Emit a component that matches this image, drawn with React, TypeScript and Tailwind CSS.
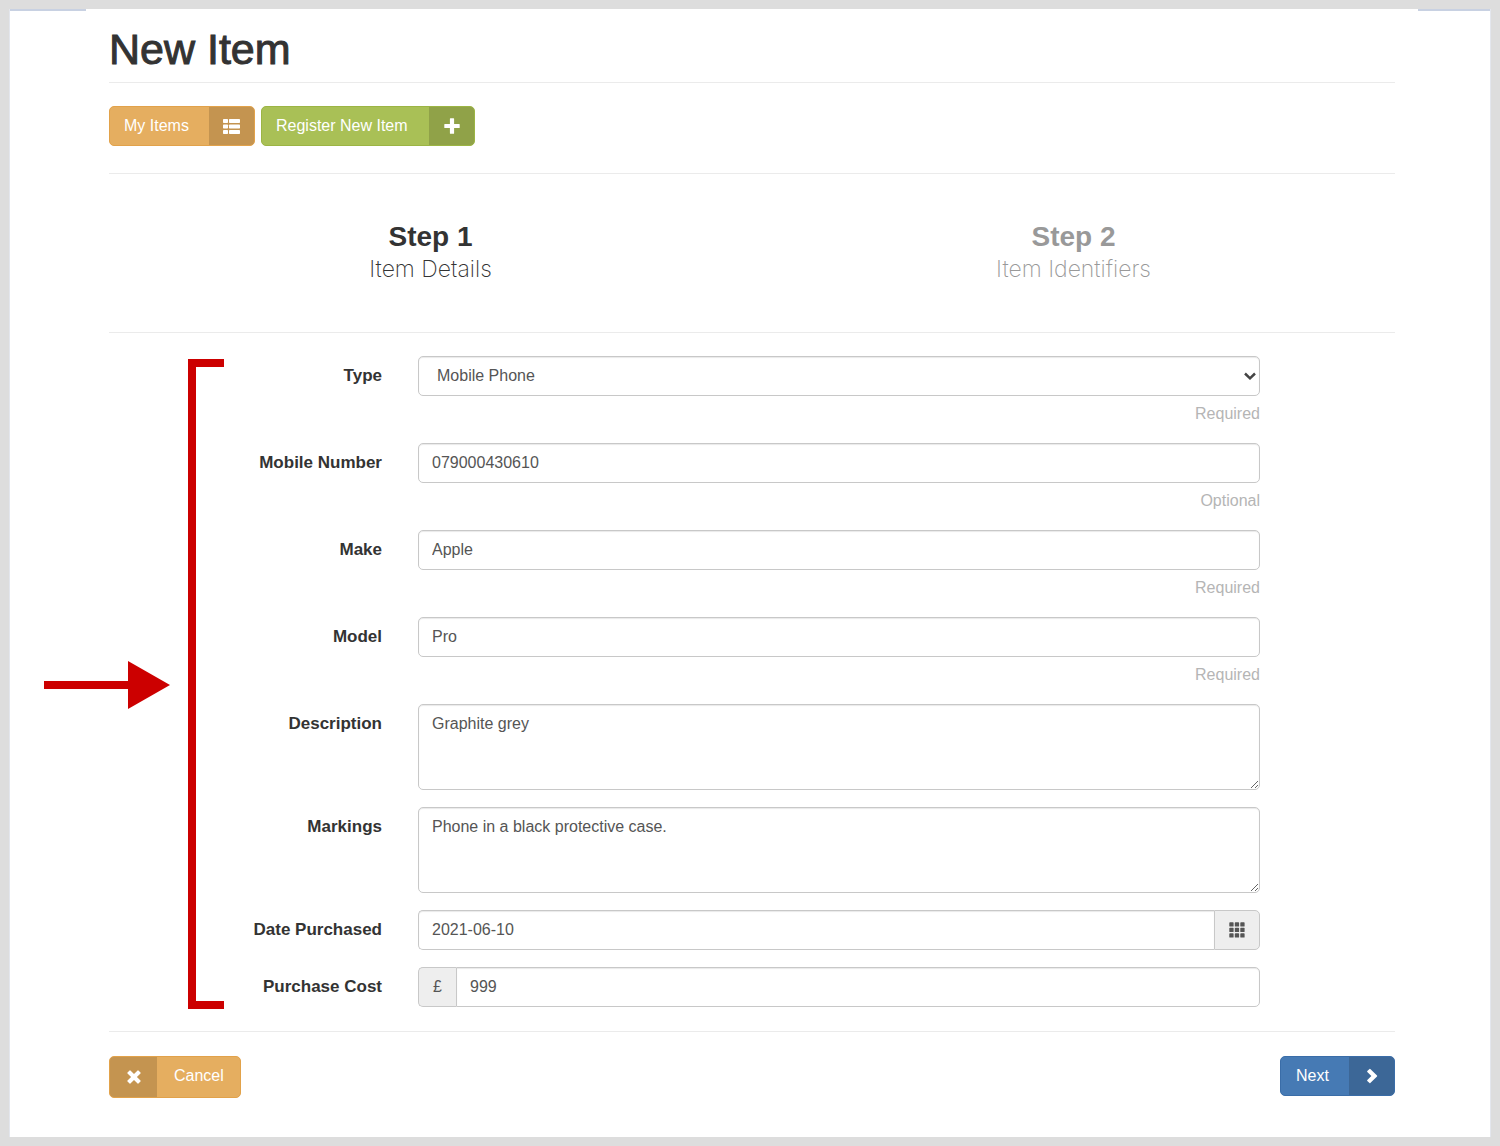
import type { ReactNode } from "react";

const controlBase =
  "block h-10 w-full min-w-0 rounded-[5px] border border-[#c8c8c8] bg-white px-[13px] text-base text-[#555] shadow-[inset_0_1px_1px_rgba(0,0,0,0.09)] outline-none focus:border-[#66afe9]";
const areaBase =
  "block h-[86px] w-full resize-y rounded-[5px] border border-[#c8c8c8] bg-white px-[13px] py-[7px] text-base text-[#555] shadow-[inset_0_1px_1px_rgba(0,0,0,0.09)] outline-none focus:border-[#66afe9]";

function ListIcon() {
  return (
    <svg viewBox="0 0 17 15" className="h-[15px] w-[17px]" fill="currentColor" aria-hidden="true">
      {[0, 5.5, 11].map((y) => (
        <g key={y}>
          <rect x="0" y={y} width="5" height="4" rx="0.7" />
          <rect x="6" y={y} width="11" height="4" rx="0.7" />
        </g>
      ))}
    </svg>
  );
}

function PlusIcon() {
  return (
    <svg viewBox="0 0 16 16" className="size-4" fill="currentColor" aria-hidden="true">
      <path d="M6.4 .3h3.200q.5 0 .5.500v5.100H15.200q.5 0 .5.500v3.200q0 .5-.5.500h-5.100V15.200q0 .5-.5.500H6.400q-.5 0-.5-.5v-5.100H.8q-.5 0-.5-.5V6.400q0-.5.500-.5h5.100V.8q0-.5.500-.5z" />
    </svg>
  );
}

function RemoveIcon() {
  return (
    <svg viewBox="0 0 14 14" className="size-3.5" fill="currentColor" aria-hidden="true">
      <path d="M3.400.5 7 4.100 10.600.5q.4-.4.8 0l2.100 2.100q.4.4 0 .8L9.900 7l3.600 3.600q.4.400 0 .8l-2.100 2.100q-.4.4-.8 0L7 9.900l-3.600 3.600q-.4.4-.8 0L.5 11.400q-.4-.4 0-.8L4.100 7 .5 3.400q-.4-.4 0-.8L2.600.5q.4-.4.8 0z" />
    </svg>
  );
}

function ChevronIcon() {
  return (
    <svg viewBox="0 0 12 16" className="h-4 w-3" fill="currentColor" aria-hidden="true">
      <path d="M4.300.9 11 7.600q.4.400 0 .8L4.300 15.100q-.4.4-.8 0L1.300 12.900q-.4-.4 0-.8L5.400 8 1.300 3.900q-.4-.4 0-.8L3.500.9q.4-.4.8 0z" />
    </svg>
  );
}

function GridIcon() {
  return (
    <svg viewBox="0 0 16 16" className="size-4" fill="currentColor" aria-hidden="true">
      {[0.3, 5.8, 11.3].map((y) =>
        [0.3, 5.8, 11.3].map((x) => (
          <rect key={x + "-" + y} x={x} y={y} width="4.300" height="4.300" rx="0.7" />
        )),
      )}
    </svg>
  );
}

function Rule() {
  return <hr className="border-0 border-t border-[#ebebeb]" />;
}

function Step({ title, name }: { title: string; name: string }) {
  return (
    <>
      <strong className="block text-[28px] leading-8 font-bold">{title}</strong>
      <span className="block font-['Inter',sans-serif] text-[23px] leading-8 font-extralight">
        {name}
      </span>
    </>
  );
}

function Field({
  id,
  label,
  hint,
  children,
}: {
  id: string;
  label: string;
  hint?: string;
  children: ReactNode;
}) {
  return (
    <div className="grid grid-cols-[273fr_842fr_99fr] gap-x-9">
      <label htmlFor={id} className="pt-2 text-right text-[17px] leading-6 font-bold text-[#333]">
        {label}
      </label>
      <div className="min-w-0">
        {children}
        {hint && <p className="mt-1.5 text-right text-base leading-6 text-[#b5b5b5]">{hint}</p>}
      </div>
    </div>
  );
}

export default function App() {
  return (
    <div className="flex min-h-screen flex-col bg-[#ddd] p-[9px] font-['Liberation_Sans',Arial,sans-serif] text-[#333]">
      <div className="flex grow flex-col border-x border-[#e3e6ed] bg-white">
        <div className="flex h-0.5 justify-between" aria-hidden="true">
          <span className="w-[76px] bg-[#c8d1e2]" />
          <span className="w-[72px] bg-[#c8d1e2]" />
        </div>
        <main className="pr-[95px] pb-[39px] pl-[99px]">
          <h1 className="pt-3.5 pb-[9px] text-[43px] leading-12 font-normal [-webkit-text-stroke:1px_#333]">
            New Item
          </h1>
          <Rule />
          <nav className="mt-[23px] mb-[27px] flex gap-1.5 text-base text-white">
            <a
              href="#my-items"
              className="flex h-10 overflow-hidden rounded-[5px] border border-[#e2a24a] bg-[#e5ae60]"
            >
              <span className="flex w-[99px] items-center pl-3.5">My Items</span>
              <span className="flex w-[45px] items-center justify-center bg-[#c49450]">
                <ListIcon />
              </span>
            </a>
            <a
              href="#register"
              className="flex h-10 overflow-hidden rounded-[5px] border border-[#9cb544] bg-[#a9c056]"
            >
              <span className="flex w-[167px] items-center pl-3.5">Register New Item</span>
              <span className="flex w-[45px] items-center justify-center bg-[#90a248]">
                <PlusIcon />
              </span>
            </a>
          </nav>
          <Rule />
          <ol className="grid grid-cols-2 py-[47px] text-center">
            <li>
              <Step title="Step 1" name="Item Details" />
            </li>
            <li className="text-[#999]">
              <Step title="Step 2" name="Item Identifiers" />
            </li>
          </ol>
          <Rule />
          <form onSubmit={(e) => e.preventDefault()}>
            <div className="relative mt-[23px] mb-6 grid gap-[17px]">
              <Field id="type" label="Type" hint="Required">
                <div className="relative">
                  <select id="type" className={controlBase + " appearance-none pl-[18px]"}>
                    <option>Mobile Phone</option>
                  </select>
                  <svg
                    viewBox="0 0 12 8"
                    className="pointer-events-none absolute top-4 right-1 h-2 w-3"
                    fill="none"
                    stroke="#444"
                    strokeWidth="2.5"
                    aria-hidden="true"
                  >
                    <path d="M1 1.500 6 6.300 11 1.500" />
                  </svg>
                </div>
              </Field>
              <Field id="number" label="Mobile Number" hint="Optional">
                <input id="number" className={controlBase} defaultValue="079000430610" />
              </Field>
              <Field id="make" label="Make" hint="Required">
                <input id="make" className={controlBase} defaultValue="Apple" />
              </Field>
              <Field id="model" label="Model" hint="Required">
                <input id="model" className={controlBase} defaultValue="Pro" />
              </Field>
              <Field id="description" label="Description">
                <textarea id="description" className={areaBase} defaultValue="Graphite grey" />
              </Field>
              <Field id="markings" label="Markings">
                <textarea
                  id="markings"
                  className={areaBase}
                  defaultValue="Phone in a black protective case."
                />
              </Field>
              <Field id="date" label="Date Purchased">
                <div className="flex">
                  <input
                    id="date"
                    className={controlBase + " rounded-r-none border-r-0"}
                    defaultValue="2021-06-10"
                  />
                  <button
                    type="button"
                    aria-label="Choose a date"
                    className="flex h-10 w-[46px] shrink-0 items-center justify-center rounded-r-[5px] border border-[#c8c8c8] bg-[#eee] text-[#555]"
                  >
                    <GridIcon />
                  </button>
                </div>
              </Field>
              <Field id="cost" label="Purchase Cost">
                <div className="flex">
                  <span className="flex h-10 w-[38px] shrink-0 items-center justify-center rounded-l-[5px] border border-r-0 border-[#c8c8c8] bg-[#eee] text-base text-[#555]">
                    £
                  </span>
                  <input
                    id="cost"
                    className={controlBase + " rounded-l-none"}
                    defaultValue="999"
                  />
                </div>
              </Field>
              <div
                className="pointer-events-none absolute top-[3px] -bottom-0.5 left-[79px] w-9 border-y-8 border-l-8 border-[#c00]"
                aria-hidden="true"
              />
              <svg
                viewBox="0 0 126 48"
                className="pointer-events-none absolute top-[305px] -left-[65px] h-12 w-[126px]"
                fill="#c00"
                aria-hidden="true"
              >
                <path d="M0 20h84V0l42 24-42 24V28H0z" />
              </svg>
            </div>
            <Rule />
            <div className="mt-6 flex items-start justify-between text-base text-white">
              <button
                type="button"
                className="flex h-[42px] overflow-hidden rounded-[5px] border border-[#e2a24a] bg-[#e5ae60]"
              >
                <span className="flex h-full w-[47px] items-center justify-center bg-[#c49450]">
                  <RemoveIcon />
                </span>
                <span className="flex h-full w-[83px] items-center pb-0.5 pl-[17px]">Cancel</span>
              </button>
              <button
                type="submit"
                className="flex h-10 overflow-hidden rounded-[5px] border border-[#3a6da8] bg-[#467ab4]"
              >
                <span className="flex h-full w-[68px] items-center pl-[15px]">Next</span>
                <span className="flex h-full w-[45px] items-center justify-center bg-[#3c6797]">
                  <ChevronIcon />
                </span>
              </button>
            </div>
          </form>
        </main>
      </div>
    </div>
  );
}
